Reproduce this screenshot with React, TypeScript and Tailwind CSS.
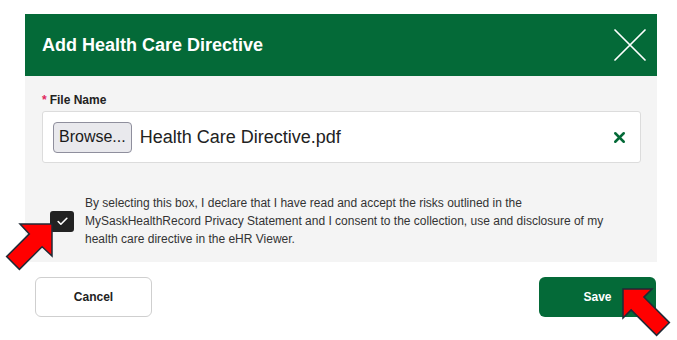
import { Check, X } from 'lucide-react';

function RedArrows() {
  return (
    <svg className="pointer-events-none absolute left-0 top-0" width="677" height="340" viewBox="0 0 677 340">
      <polygon
        points="52,224 20,224 29.3,233.9 6.6,256.6 19.4,269.4 42.1,246.7 52,256"
        fill="#ff0000"
        stroke="#1f2a36"
        strokeWidth="1.5"
        strokeLinejoin="miter"
      />
      <polygon
        points="623,289 652,289 643.9,297.1 669.4,322.6 656.6,335.4 631.1,309.9 623,318"
        fill="#ff0000"
        stroke="#1f2a36"
        strokeWidth="1.5"
        strokeLinejoin="miter"
      />
    </svg>
  );
}

function CloseIcon() {
  return (
    <svg width="34" height="34" viewBox="0 0 34 34" className="text-white">
      <path d="M2 2 L32 32 M32 2 L2 32" stroke="currentColor" strokeWidth="1.75" strokeLinecap="round" />
    </svg>
  );
}

export default function App() {
  return (
    <div className="relative h-[340px] w-[677px] overflow-hidden bg-white font-['Liberation_Sans',Arial,sans-serif]">
      <div className="ml-[25px] mt-[14px] w-[632px]">
        {/* header */}
        <div className="flex h-[62px] items-center justify-between bg-[#046a38] pl-[17px] pr-[10px]">
          <h2 className="text-[18px] font-bold text-white">Add Health Care Directive</h2>
          <CloseIcon />
        </div>

        {/* body */}
        <div className="h-[186px] bg-[#f4f4f4] pl-[17px] pr-[16px] pt-[17px]">
          <div className="flex items-center text-[12px] font-bold leading-[14px] text-[#222]">
            <span className="mr-[3px] text-[#e0245e]">*</span>
            File Name
          </div>
          <div className="mt-[4px] flex h-[52px] items-center rounded-[3px] border border-[#dcdcdc] bg-white pl-[10px] pr-[12px]">
            <button className="h-[31px] rounded-[4px] border border-[#8f8f9d] bg-[#e9e9ed] px-[5px] text-[16px] text-[#1a1a1a]">
              Browse...
            </button>
            <span className="ml-[8px] flex-1 text-[18px] text-[#222]">Health Care Directive.pdf</span>
            <X className="h-[17px] w-[17px] text-[#046a38]" strokeWidth={3.5} />
          </div>
          <div className="mt-[31px] flex items-center">
            <div className="ml-[8px] flex h-[21px] w-[24px] shrink-0 items-center justify-center rounded-[3px] bg-[#222]">
              <Check className="h-[13px] w-[13px] text-white" strokeWidth={3} />
            </div>
            <p className="ml-[11px] text-[12px] leading-[18px] text-[#333]">
              By selecting this box, I declare that I have read and accept the risks outlined in the
              <br />
              MySaskHealthRecord Privacy Statement and I consent to the collection, use and disclosure of my
              <br />
              health care directive in the eHR Viewer.
            </p>
          </div>
        </div>

        {/* footer */}
        <div className="flex justify-between pl-[10px] pr-[1px] pt-[15px]">
          <button className="h-[40px] w-[117px] rounded-[6px] border border-[#cfcfcf] bg-white text-[12px] font-bold text-[#222]">
            Cancel
          </button>
          <button className="h-[40px] w-[117px] rounded-[6px] bg-[#046a38] text-[12px] font-bold text-white">
            Save
          </button>
        </div>
      </div>
      <RedArrows />
    </div>
  );
}
